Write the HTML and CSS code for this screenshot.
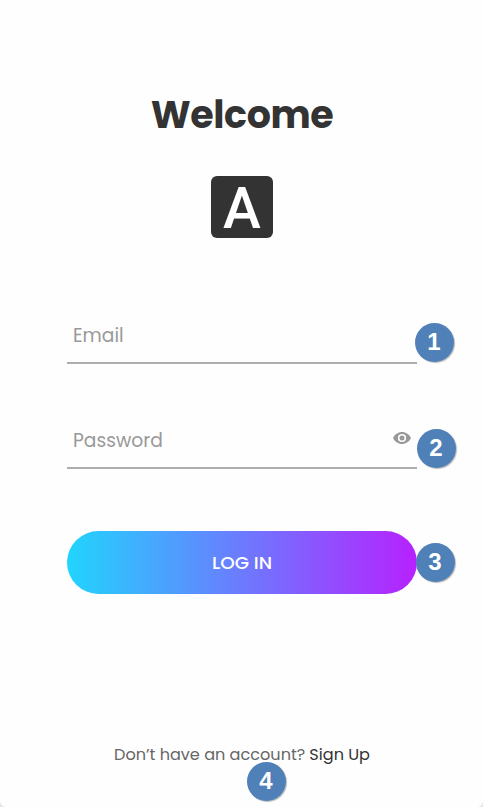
FILE: index.html
```html
<!DOCTYPE html>
<html lang="en">
<head>
<meta charset="utf-8">
<title>Welcome</title>
<link rel="stylesheet" href="styles.css">
</head>
<body>
<main class="card">
  <h1 class="title">Welcome</h1>
  <div class="logo">A</div>
  <form class="form">
    <div class="field">
      <span class="label">Email</span>
      <b class="badge badge-1">1</b>
    </div>
    <div class="field">
      <span class="label">Password</span>
      <svg class="eye" viewBox="0 0 18 12" width="18" height="12"><path fill="#999" fill-rule="evenodd" d="M9 0C5 0 1.700 2.500 0 6c1.700 3.500 5 6 9 6s7.300-2.500 9-6C16.300 2.500 13 0 9 0zM9 1.900a4.100 4.100 0 1 1 0 8.200a4.100 4.100 0 1 1 0-8.200zM9 3.500a2.500 2.500 0 1 0 0 5a2.500 2.500 0 1 0 0-5z"/></svg>
      <b class="badge badge-2">2</b>
    </div>
    <div class="submit">
      <button class="button" type="button">LOG IN</button>
      <b class="badge badge-3">3</b>
    </div>
  </form>
  <footer class="signup">
    <span class="question">Don’t have an account?</span>
    <a class="link">Sign Up</a>
    <b class="badge badge-4">4</b>
  </footer>
</main>
</body>
</html>
```
FILE: styles.css
```css
* { box-sizing: border-box; }
body {
  margin: 0;
  background: #e6e6e6;
  font-family: Poppins, Inter, "Liberation Sans", sans-serif;
}
.card {
  height: 807px;
  padding: 90px 66px 0 67px;
  border-radius: 0 0 6px 6px;
  background: #fefefe;
  overflow: hidden;
}
.title {
  margin: 0;
  height: 47px;
  font-size: 38px;
  line-height: 49px;
  letter-spacing: -0.4px;
  font-weight: 700;
  color: #333;
  text-align: center;
  white-space: nowrap;
}
.logo {
  width: 62px;
  height: 62px;
  margin: 39px auto 0;
  border-radius: 6px;
  background: #333;
  color: #fff;
  font: 500 57px/65px Roboto, sans-serif;
  text-align: center;
}
.form { margin-top: 72px; }
.field {
  position: relative;
  display: flex;
  align-items: center;
  justify-content: space-between;
  height: 54px;
  margin-bottom: 51px;
  padding: 0 6px 1px;
  border-bottom: 2px solid #adadad;
  font-size: 18.7px;
  color: #999;
}
.eye { margin-bottom: 5px; }
.submit { position: relative; margin-top: 62px; }
.button {
  display: block;
  width: 100%;
  height: 63px;
  padding: 0;
  border: 0;
  border-radius: 32px;
  background: linear-gradient(to right, #21d4fd, #b721ff);
  color: #fff;
  font: 500 18.5px/63px Poppins, Inter, sans-serif;
}
.signup {
  position: relative;
  display: flex;
  justify-content: space-between;
  margin: 149px 47px 0 47px;
  font-size: 16.1px;
  line-height: 24px;
  color: #666;
  white-space: nowrap;
}
.link { color: #333; }
.badge {
  position: absolute;
  width: 39px;
  height: 39px;
  padding-right: 1px;
  border-radius: 50%;
  background: #4f81b8;
  box-shadow: 1px 1px 1px #bbb;
  color: #fff;
  font: 700 24px/37px "Liberation Sans", Arial, sans-serif;
  text-align: center;
}
.badge-1 { left: 348px; top: 13px; }
.badge-2 { left: 350px; top: 14px; }
.badge-3 { left: 349px; top: 12px; }
.badge-4 { left: 133px; top: 19px; }
```
